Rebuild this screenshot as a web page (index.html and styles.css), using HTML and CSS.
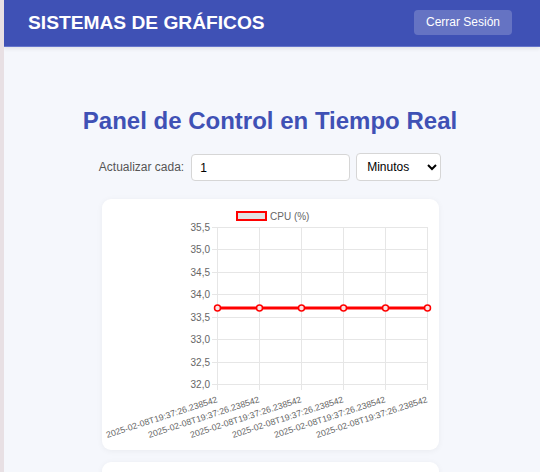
FILE: index.html
```html
<!DOCTYPE html>
<html lang="es">
<head>
<meta charset="utf-8">
<title>Sistemas de Gráficos</title>
<link rel="stylesheet" href="styles.css">
</head>
<body>
<header class="topbar">
  <h1 class="brand">SISTEMAS DE GRÁFICOS</h1>
  <button class="logout">Cerrar Sesión</button>
</header>
<main class="main">
  <h2 class="title">Panel de Control en Tiempo Real</h2>
  <div class="controls">
    <label class="ctl-label" for="intervalo">Actualizar cada:</label>
    <input id="intervalo" class="ctl-input" type="text" value="1">
    <select class="ctl-select">
      <option>Minutos</option>
      <option>Segundos</option>
    </select>
  </div>
  <section class="card">
    <svg class="chart" width="337" height="251" viewBox="0 0 337 251" xmlns="http://www.w3.org/2000/svg">
      <g font-family="Liberation Sans, Arial, sans-serif" fill="#666">
        <rect x="135" y="13" width="29" height="8" fill="#e2e2e2" stroke="#ff0000" stroke-width="2"/>
        <text x="168" y="20.5" font-size="10">CPU (%)</text>
      </g>
      <g stroke="#e6e6e6" stroke-width="1">
        <line x1="110" y1="28.5" x2="325" y2="28.5"/>
        <line x1="110" y1="50.5" x2="325" y2="50.5"/>
        <line x1="110" y1="73.5" x2="325" y2="73.5"/>
        <line x1="110" y1="95.5" x2="325" y2="95.5"/>
        <line x1="110" y1="118.5" x2="325" y2="118.5"/>
        <line x1="110" y1="140.5" x2="325" y2="140.5"/>
        <line x1="110" y1="163.5" x2="325" y2="163.5"/>
        <line x1="110" y1="185.5" x2="325" y2="185.5"/>
        <line x1="115.5" y1="28" x2="115.5" y2="191"/>
        <line x1="157.5" y1="28" x2="157.5" y2="191"/>
        <line x1="199.5" y1="28" x2="199.5" y2="191"/>
        <line x1="241.5" y1="28" x2="241.5" y2="191"/>
        <line x1="283.5" y1="28" x2="283.5" y2="191"/>
        <line x1="325.5" y1="28" x2="325.5" y2="191"/>
      </g>
      <g font-family="Liberation Sans, Arial, sans-serif" font-size="10" fill="#666" text-anchor="end">
        <text x="108" y="32">35,5</text>
        <text x="108" y="54">35,0</text>
        <text x="108" y="77">34,5</text>
        <text x="108" y="99">34,0</text>
        <text x="108" y="122">33,5</text>
        <text x="108" y="144">33,0</text>
        <text x="108" y="167">32,5</text>
        <text x="108" y="189">32,0</text>
      </g>
      <g font-family="Liberation Sans, Arial, sans-serif" font-size="8.8" fill="#666" text-anchor="end">
        <text transform="translate(116 203) rotate(-18)">2025-02-08T19:37:26.238542</text>
        <text transform="translate(158 203) rotate(-18)">2025-02-08T19:37:26.238542</text>
        <text transform="translate(200 203) rotate(-18)">2025-02-08T19:37:26.238542</text>
        <text transform="translate(242 203) rotate(-18)">2025-02-08T19:37:26.238542</text>
        <text transform="translate(284 203) rotate(-18)">2025-02-08T19:37:26.238542</text>
        <text transform="translate(326 203) rotate(-18)">2025-02-08T19:37:26.238542</text>
      </g>
      <line x1="115" y1="109" x2="325" y2="109" stroke="#ff0000" stroke-width="3"/>
      <g fill="#fbe3e3" stroke="#ff0000" stroke-width="1.5">
        <circle cx="115.5" cy="109" r="3"/>
        <circle cx="157.5" cy="109" r="3"/>
        <circle cx="199.5" cy="109" r="3"/>
        <circle cx="241.5" cy="109" r="3"/>
        <circle cx="283.5" cy="109" r="3"/>
        <circle cx="325.5" cy="109" r="3"/>
      </g>
    </svg>
  </section>
  <section class="card card-next"></section>
</main>
</body>
</html>
```

FILE: styles.css
```css
html {
  background: #e8e0e4;
}
body {
  margin: 0 0 0 4px;
  background: #f5f7fc;
  font-family: "Liberation Sans", Arial, sans-serif;
  min-height: 472px;
  overflow: hidden;
}
.topbar {
  height: 47px;
  box-sizing: border-box;
  background: #3f51b5;
  border-bottom: 1px solid #6575cb;
  box-shadow: 0 2px 4px rgba(0, 0, 0, 0.08);
  display: flex;
  align-items: center;
  justify-content: space-between;
  padding: 0 28px 0 24px;
}
.brand {
  margin: 0;
  color: #ffffff;
  font-size: 19.2px;
  font-weight: bold;
  line-height: 22px;
}
.logout {
  font-family: "Liberation Sans", Arial, sans-serif;
  font-size: 12px;
  color: #ffffff;
  background: rgba(255, 255, 255, 0.2);
  border: none;
  border-radius: 4px;
  width: 98px;
  height: 25px;
  padding: 0;
  margin-top: -2px;
}
.main {
  padding: 0 4px 0 0;
  display: flex;
  flex-direction: column;
  align-items: center;
}
.title {
  margin: 60px 0 0;
  color: #3f51b5;
  font-size: 24px;
  line-height: 28px;
  font-weight: bold;
}
.controls {
  margin-top: 18px;
  display: flex;
  align-items: center;
  height: 28px;
}
.ctl-label {
  font-size: 12px;
  color: #555555;
  margin-right: 7px;
}
.ctl-input {
  box-sizing: border-box;
  width: 159px;
  height: 27px;
  padding: 0 8px;
  border: 1px solid #d6d6d6;
  border-radius: 4px;
  font-family: "Liberation Sans", Arial, sans-serif;
  font-size: 12px;
  color: #000;
  background: #ffffff;
  margin-top: 1px;
}
.ctl-select {
  box-sizing: border-box;
  margin-left: 6px;
  width: 85px;
  height: 28px;
  padding: 0 4px 0 6px;
  border: 1px solid #d6d6d6;
  border-radius: 4px;
  font-family: "Liberation Sans", Arial, sans-serif;
  font-size: 12px;
  color: #000;
  background: #ffffff;
}
.card {
  margin-top: 18px;
  width: 337px;
  height: 251px;
  background: #ffffff;
  border-radius: 9px;
  box-shadow: 0 1px 6px rgba(0, 0, 0, 0.05);
}
.card-next {
  margin-top: 12px;
  height: 60px;
}
.chart {
  display: block;
}
```
